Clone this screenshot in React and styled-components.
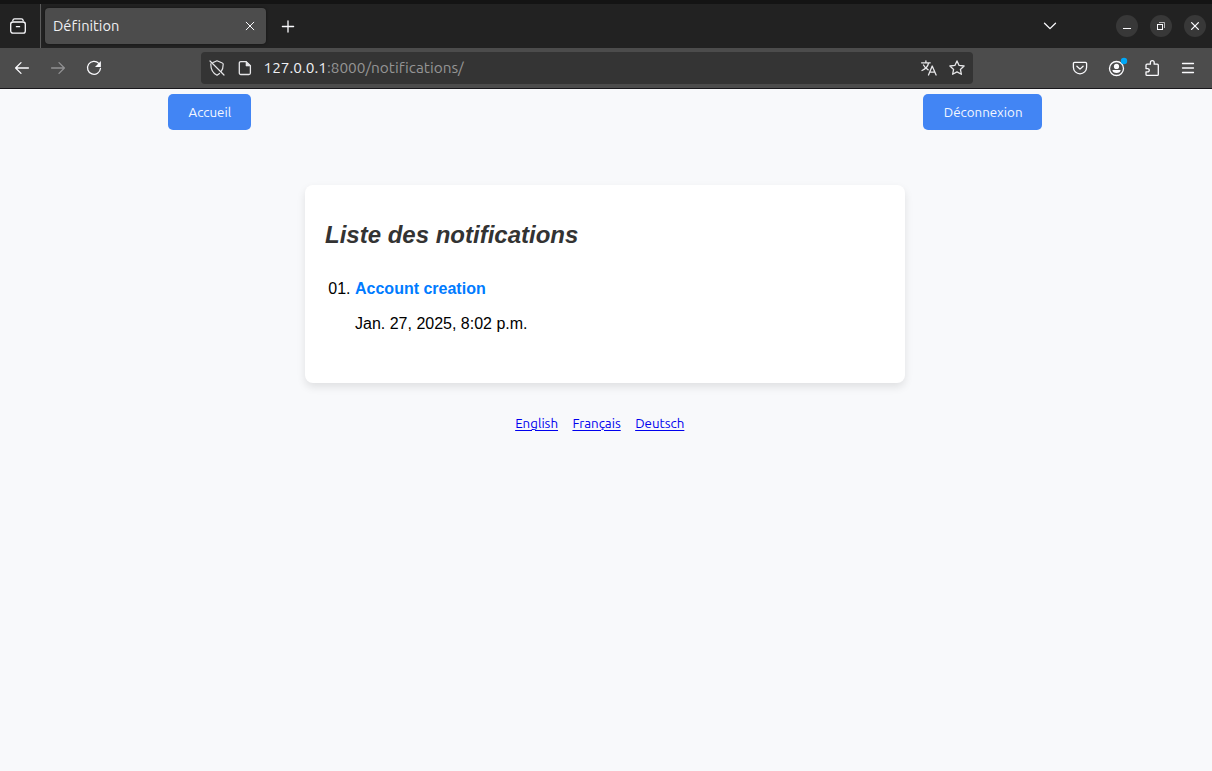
import React from "react";
import styled, { createGlobalStyle } from "styled-components";

const GlobalStyle = createGlobalStyle`
  * { box-sizing: border-box; }
  body { margin: 0; background: #f8f9fb; overflow: hidden; }
`;

const uiFont = `Ubuntu, "Noto Sans", "Open Sans", sans-serif`;

const Window = styled.div`
  height: 771px;
  display: flex;
  flex-direction: column;
  background: #f8f9fb;
`;

const TitleBar = styled.header`
  height: 48px;
  flex: none;
  display: flex;
  align-items: stretch;
  background: #222222;
  border-top: 4px solid #141414;
  color: #fbfbfe;
`;

const Cell = styled.div`
  width: ${(p) => p.$w}px;
  display: flex;
  align-items: center;
  justify-content: center;
  flex: none;
`;

const ViewCell = styled(Cell)`
  padding-right: 5px;
  border-right: 1px solid #5c5c5c;
`;

const Tab = styled.div`
  width: 221px;
  height: 36px;
  margin: 4px 0 0 4px;
  padding: 0 8px;
  display: flex;
  align-items: center;
  justify-content: space-between;
  border-radius: 4px;
  background: #4c4c4c;
  box-shadow: 0 0 3px rgba(0, 0, 0, 0.5);
`;

const TabTitle = styled.span`
  font: 14.667px/20px ${uiFont};
  font-variant-ligatures: none;
  color: #f0f0f3;
`;

const Spacer = styled.div`
  flex: 1;
`;

const WindowControls = styled.div`
  display: flex;
  align-items: center;
  gap: 12px;
  margin: 0 6px 0 48px;
`;

const ControlButton = styled.div`
  width: 22px;
  height: 22px;
  border-radius: 50%;
  background: #383838;
  display: flex;
  align-items: center;
  justify-content: center;
`;

const NavBar = styled.nav`
  height: 41px;
  flex: none;
  display: flex;
  align-items: center;
  padding: 0 6px 0 4px;
  background: #4c4c4c;
  border-bottom: 1px solid #18171b;
  color: #fbfbfe;
`;

const UrlBar = styled.div`
  width: 772px;
  height: 32px;
  margin-left: 89px;
  padding: 0 2px;
  display: flex;
  align-items: center;
  border-radius: 4px;
  background: #343434;
  color: #e6e6e8;
`;

const UrlText = styled.span`
  margin-left: 4.5px;
  font: 15.4px/20px ${uiFont};
  font-variant-ligatures: none;
  color: #949495;
`;

const Host = styled.span`
  color: #f0f0f3;
`;

const Glyph = styled.svg`
  display: block;
  width: 16px;
  height: 16px;
  fill: none;
  stroke: currentColor;
  stroke-width: 1.3;
  stroke-linecap: round;
  stroke-linejoin: round;
  opacity: ${(p) => (p.$dim ? 0.4 : 1)};
  overflow: visible;
`;

const Page = styled.main`
  flex: 1;
  display: flex;
  flex-direction: column;
  align-items: center;
`;

const Actions = styled.div`
  width: 874px;
  margin: 5px 2px 0 0;
  display: flex;
  justify-content: space-between;
`;

const ActionButton = styled.button`
  height: 36px;
  padding: 2px 19.5px 0 20.5px;
  border: 0;
  border-radius: 5px;
  background: #4285f4;
  color: #f4f7ff;
  font: 13.333px/18px ${uiFont};
`;

const Card = styled.section`
  width: 600px;
  height: 198px;
  margin: 55px 2px 0 0;
  padding: 36px 20px 20px;
  border-radius: 8px;
  background: #fff;
  box-shadow: 0 4px 8px rgba(0, 0, 0, 0.1);
  font: 16px/18px "Liberation Sans", Arial, sans-serif;
  color: #000;
`;

const Heading = styled.h2`
  margin: 0 0 32px;
  font-size: 24px;
  line-height: 27px;
  font-style: italic;
  color: #333;
`;

const List = styled.ol`
  margin: 0;
  padding-left: 30px;
  list-style: decimal-leading-zero;
`;

const ItemLink = styled.a`
  font-weight: bold;
  color: #007bff;
`;

const DateLine = styled.p`
  margin: 17px 0 0;
`;

const Languages = styled.div`
  display: flex;
  gap: 14.4px;
  margin: 32px 12.500px 0 0;
`;

const Language = styled.a`
  font: 13.333px/18px ${uiFont};
  white-space: nowrap;
  color: #0000ee;
  text-decoration: underline;
  text-decoration-thickness: 1px;
  text-underline-offset: 2px;
`;

function Icon({ children, dim }) {
  return (
    <Glyph viewBox="0 0 16 16" $dim={dim}>
      {children}
    </Glyph>
  );
}

export default function App() {
  return (
    <Window>
      <GlobalStyle />
      <TitleBar>
        <ViewCell $w={41}>
          <Icon>
            <rect x="0.7" y="4" width="14.6" height="11.2" rx="2.2" />
            <path d="M2.8 2.7C3 1.4 3.6.9 4.6.9h6.8c1 0 1.6.5 1.8 1.8M6.4 8.7h3.2" />
          </Icon>
        </ViewCell>
        <Tab>
          <TabTitle>Définition</TabTitle>
          <Icon>
            <path d="M4.2 4.2l7.6 7.600M11.800 4.200l-7.600 7.600" strokeWidth="1" />
          </Icon>
        </Tab>
        <Cell $w={43}>
          <Icon>
            <path d="M8 2.900v11.200M2.400 8.500h11.200" />
          </Icon>
        </Cell>
        <Spacer />
        <Cell $w={36}>
          <Icon>
            <path d="M2.500 5.300L8 10.600l5.500-5.300" />
          </Icon>
        </Cell>
        <WindowControls>
          <ControlButton>
            <Icon>
              <path d="M4 10.500h8" strokeLinecap="butt" strokeWidth="1" />
            </Icon>
          </ControlButton>
          <ControlButton>
            <Icon>
              <g strokeLinejoin="miter" strokeLinecap="butt" strokeWidth="1">
                <rect x="4.500" y="6.500" width="5" height="5" />
                <path d="M6 4.500h5.500V10" opacity="0.65" />
              </g>
            </Icon>
          </ControlButton>
          <ControlButton>
            <Icon>
              <path d="M4.600 4.600l6.800 6.800M11.400 4.600l-6.800 6.800" />
            </Icon>
          </ControlButton>
        </WindowControls>
      </TitleBar>

      <NavBar>
        <Cell $w={36}>
          <Icon>
            <path d="M14.400 8H1.600M7 2.600L1.600 8 7 13.400" />
          </Icon>
        </Cell>
        <Cell $w={36}>
          <Icon dim>
            <path d="M1.600 8h12.800M9 2.600L14.400 8 9 13.400" />
          </Icon>
        </Cell>
        <Cell $w={36}>
          <Icon>
            <path d="M12.800 3.400A6.500 6.500 0 1 0 14.500 8.300" />
            <path d="M14.900 1v5.500a.5.5 0 0 1-.5.500H9z" fill="currentColor" stroke="none" />
          </Icon>
        </Cell>
        <UrlBar>
          <Cell $w={28}>
            <Icon>
              <g strokeWidth="1.200">
                <path d="M4.100 2.500L8 .8l5.300 2.200c.6.200.9.600.9 1.200 0 3-.6 5.500-2.100 7.500M10.500 13.400L8 15.200C4 13.200 1.800 9.800 1.800 4.200v-.4M1 1l14 14" />
              </g>
            </Icon>
          </Cell>
          <Cell $w={28}>
            <Icon>
              <path d="M3.800 1.600h5.400l4.200 4.200v7.200a1.500 1.500 0 0 1-1.500 1.500H3.800a1.500 1.500 0 0 1-1.500-1.500V3.100a1.500 1.500 0 0 1 1.500-1.500z" />
              <path d="M9 1.600v4.400h4.400z" fill="currentColor" strokeWidth=".6" />
            </Icon>
          </Cell>
          <UrlText>
            <Host>127.0.0.1</Host>:8000/notifications/
          </UrlText>
          <Spacer />
          <Cell $w={28}>
            <Icon>
              <path d="M.6 2.800h8.600M4.900.8v2M7.600 3C6.800 6.500 4.700 8.900 1 10.500M2.500 5c1.200 2.400 2.600 3.700 4.700 4.800" />
              <path d="M7.500 15l3.700-9 3.900 9M8.700 12.200h5.200" />
            </Icon>
          </Cell>
          <Cell $w={28}>
            <Icon>
              <path d="M8 .9l2.100 4.500 5 .6-3.700 3.400 1 4.900L8 11.900l-4.400 2.400 1-4.900L.9 6l5-.6z" />
            </Icon>
          </Cell>
        </UrlBar>
        <Spacer />
        <Cell $w={37}>
          <Icon>
            <path d="M2.600 2.400h10.800c.7 0 1.200.5 1.200 1.200v3.600a6.600 6.600 0 0 1-13.200 0V3.600c0-.7.5-1.200 1.200-1.200z" />
            <path d="M4.900 6.200L8 9.100l3.100-2.900" />
          </Icon>
        </Cell>
        <Cell $w={36}>
          <Icon>
            <circle cx="8.500" cy="8.500" r="7" />
            <circle cx="8.500" cy="6.400" r="2.600" fill="currentColor" stroke="none" />
            <path d="M4.400 10h8.200c0 1.700-1.700 3-4.100 3s-4.100-1.300-4.100-3z" fill="currentColor" stroke="none" />
            <circle cx="16" cy="1" r="3.200" fill="#00a8f8" stroke="none" />
          </Icon>
        </Cell>
        <Cell $w={36}>
          <Icon>
            <path d="M6.400 4.200V2.600a1.900 1.900 0 0 1 3.800 0v1.600h3.100c.6 0 1 .4 1 1v9.200c0 .6-.4 1-1 1H3c-.6 0-1-.4-1-1v-2.500h1.600a1.600 1.600 0 0 0 0-3.300H2V5.200c0-.6.4-1 1-1z" />
          </Icon>
        </Cell>
        <Cell $w={36}>
          <Icon>
            <path d="M2.500 3.500h11M2.500 8h11M2.500 12.500h11" />
          </Icon>
        </Cell>
      </NavBar>

      <Page>
        <Actions>
          <ActionButton>Accueil</ActionButton>
          <ActionButton>Déconnexion</ActionButton>
        </Actions>
        <Card>
          <Heading>Liste des notifications</Heading>
          <List>
            <li>
              <ItemLink>Account creation</ItemLink>
              <DateLine>Jan. 27, 2025, 8:02 p.m.</DateLine>
            </li>
          </List>
        </Card>
        <Languages>
          <Language>English</Language>
          <Language>Français</Language>
          <Language>Deutsch</Language>
        </Languages>
      </Page>
    </Window>
  );
}
